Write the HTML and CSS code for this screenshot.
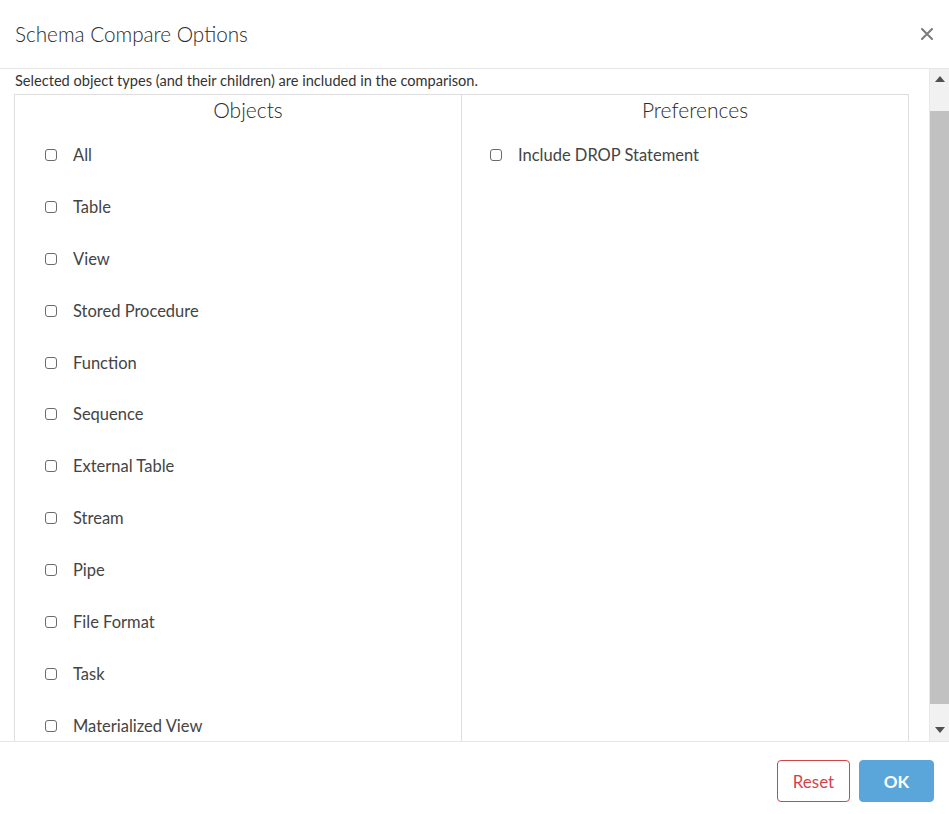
FILE: index.html
```html
<!DOCTYPE html>
<html lang="en">
<head>
<meta charset="utf-8">
<title>Schema Compare Options</title>
<link rel="stylesheet" href="styles.css">
</head>
<body>
<div class="dialog">
  <header class="dlg-header">
    <h1 class="dlg-title">Schema Compare Options</h1>
    <button class="dlg-close" aria-label="Close">
      <svg width="12" height="12" viewBox="0 0 12 12"><path d="M1 1L11 11M11 1L1 11" stroke="#7a7a7a" stroke-width="2" stroke-linecap="round"/></svg>
    </button>
  </header>
  <div class="dlg-body">
    <div class="scroll-content">
      <p class="hint">Selected object types (and their children) are included in the comparison.</p>
      <div class="options-box">
        <section class="col">
          <h2 class="col-title">Objects</h2>
          <ul class="opt-list">
            <li class="opt"><span class="cb"></span><span class="lbl">All</span></li>
            <li class="opt"><span class="cb"></span><span class="lbl">Table</span></li>
            <li class="opt"><span class="cb"></span><span class="lbl">View</span></li>
            <li class="opt"><span class="cb"></span><span class="lbl">Stored Procedure</span></li>
            <li class="opt"><span class="cb"></span><span class="lbl">Function</span></li>
            <li class="opt"><span class="cb"></span><span class="lbl">Sequence</span></li>
            <li class="opt"><span class="cb"></span><span class="lbl">External Table</span></li>
            <li class="opt"><span class="cb"></span><span class="lbl">Stream</span></li>
            <li class="opt"><span class="cb"></span><span class="lbl">Pipe</span></li>
            <li class="opt"><span class="cb"></span><span class="lbl">File Format</span></li>
            <li class="opt"><span class="cb"></span><span class="lbl">Task</span></li>
            <li class="opt"><span class="cb"></span><span class="lbl">Materialized View</span></li>
          </ul>
        </section>
        <section class="col col-right">
          <h2 class="col-title">Preferences</h2>
          <ul class="opt-list">
            <li class="opt"><span class="cb"></span><span class="lbl">Include DROP Statement</span></li>
          </ul>
        </section>
      </div>
    </div>
    <div class="scrollbar">
      <div class="sb-btn"><svg width="10" height="6" viewBox="0 0 10 6"><path d="M0 6L5 0L10 6Z" fill="#505050"/></svg></div>
      <div class="sb-track"><div class="sb-thumb"></div></div>
      <div class="sb-btn"><svg width="10" height="6" viewBox="0 0 10 6"><path d="M0 0L5 6L10 0Z" fill="#505050"/></svg></div>
    </div>
  </div>
  <footer class="dlg-footer">
    <button class="btn btn-reset">Reset</button>
    <button class="btn btn-ok">OK</button>
  </footer>
</div>
</body>
</html>
```
FILE: styles.css
```css
* { box-sizing: border-box; }
html, body { margin: 0; padding: 0; background: #fff; }
body {
  font-family: "Lato", "Open Sans", sans-serif;
  color: #333;
}
.dialog {
  width: 949px;
  height: 814px;
  display: flex;
  flex-direction: column;
  background: #fff;
}
.dlg-header {
  height: 69px;
  flex: none;
  display: flex;
  align-items: center;
  justify-content: space-between;
  padding: 0 16px 1px 15px;
  border-bottom: 1px solid #e6e6e6;
}
.dlg-title {
  margin: 0;
  font-size: 20.7px;
  font-weight: 300;
  color: #2a2a2a;
}
.dlg-close {
  border: 0;
  background: none;
  padding: 0;
  width: 12px;
  height: 12px;
  display: flex;
}
.dlg-body {
  height: 672px;
  flex: none;
  display: flex;
  overflow: hidden;
}
.scroll-content {
  flex: 1;
  padding: 0 20px 0 14px;
  overflow: hidden;
}
.hint {
  margin: 0;
  height: 25px;
  padding: 3px 0 0 1px;
  font-size: 14.6px;
  font-weight: 400;
  line-height: 18px;
  color: #333;
  white-space: nowrap;
}
.options-box {
  display: flex;
  border: 1px solid #dedede;
}
.col {
  flex: 1;
  min-width: 0;
}
.col-right {
  border-left: 1px solid #dedede;
}
.col-title {
  margin: 0;
  height: 34px;
  padding-left: 20px;
  text-align: center;
  font-size: 21px;
  font-weight: 300;
  line-height: 30px;
  color: #2a2a2a;
}
.opt-list {
  list-style: none;
  margin: 0;
  padding: 0;
}
.opt {
  height: 51.9px;
  display: flex;
  align-items: center;
  padding-left: 30px;
  font-size: 16.5px;
}
.col-right .opt { padding-left: 28px; }
.cb {
  width: 12px;
  height: 12px;
  border: 1px solid #6b6b6b;
  border-radius: 3px;
  margin-right: 16px;
  flex: none;
}
.lbl { color: #444; }
.scrollbar {
  width: 20px;
  flex: none;
  display: flex;
  flex-direction: column;
  background: #f1f1f1;
  border-left: 1px solid #e8e8e8;
}
.sb-btn {
  height: 20px;
  flex: none;
  display: flex;
  align-items: center;
  justify-content: center;
}
.sb-btn:last-child { height: 18px; align-items: flex-start; padding-top: 4px; }
.sb-track {
  flex: 1;
  padding-top: 22px;
  padding-bottom: 19px;
  display: flex;
}
.sb-thumb {
  flex: 1;
  background: #c1c1c1;
}
.dlg-footer {
  flex: 1;
  border-top: 1px solid #e6e6e6;
  display: flex;
  justify-content: flex-end;
  align-items: flex-start;
  gap: 9px;
  padding: 18px 15px 0 0;
}
.btn {
  height: 42px;
  border-radius: 4px;
  font-family: inherit;
  font-size: 17px;
  cursor: pointer;
}
.btn-reset {
  width: 73px;
  background: #fff;
  border: 1px solid #d2434f;
  color: #d2434f;
}
.btn-ok {
  width: 75px;
  background: #5aa6db;
  border: 1px solid #5aa6db;
  color: #fff;
  font-weight: 700;
}
```
